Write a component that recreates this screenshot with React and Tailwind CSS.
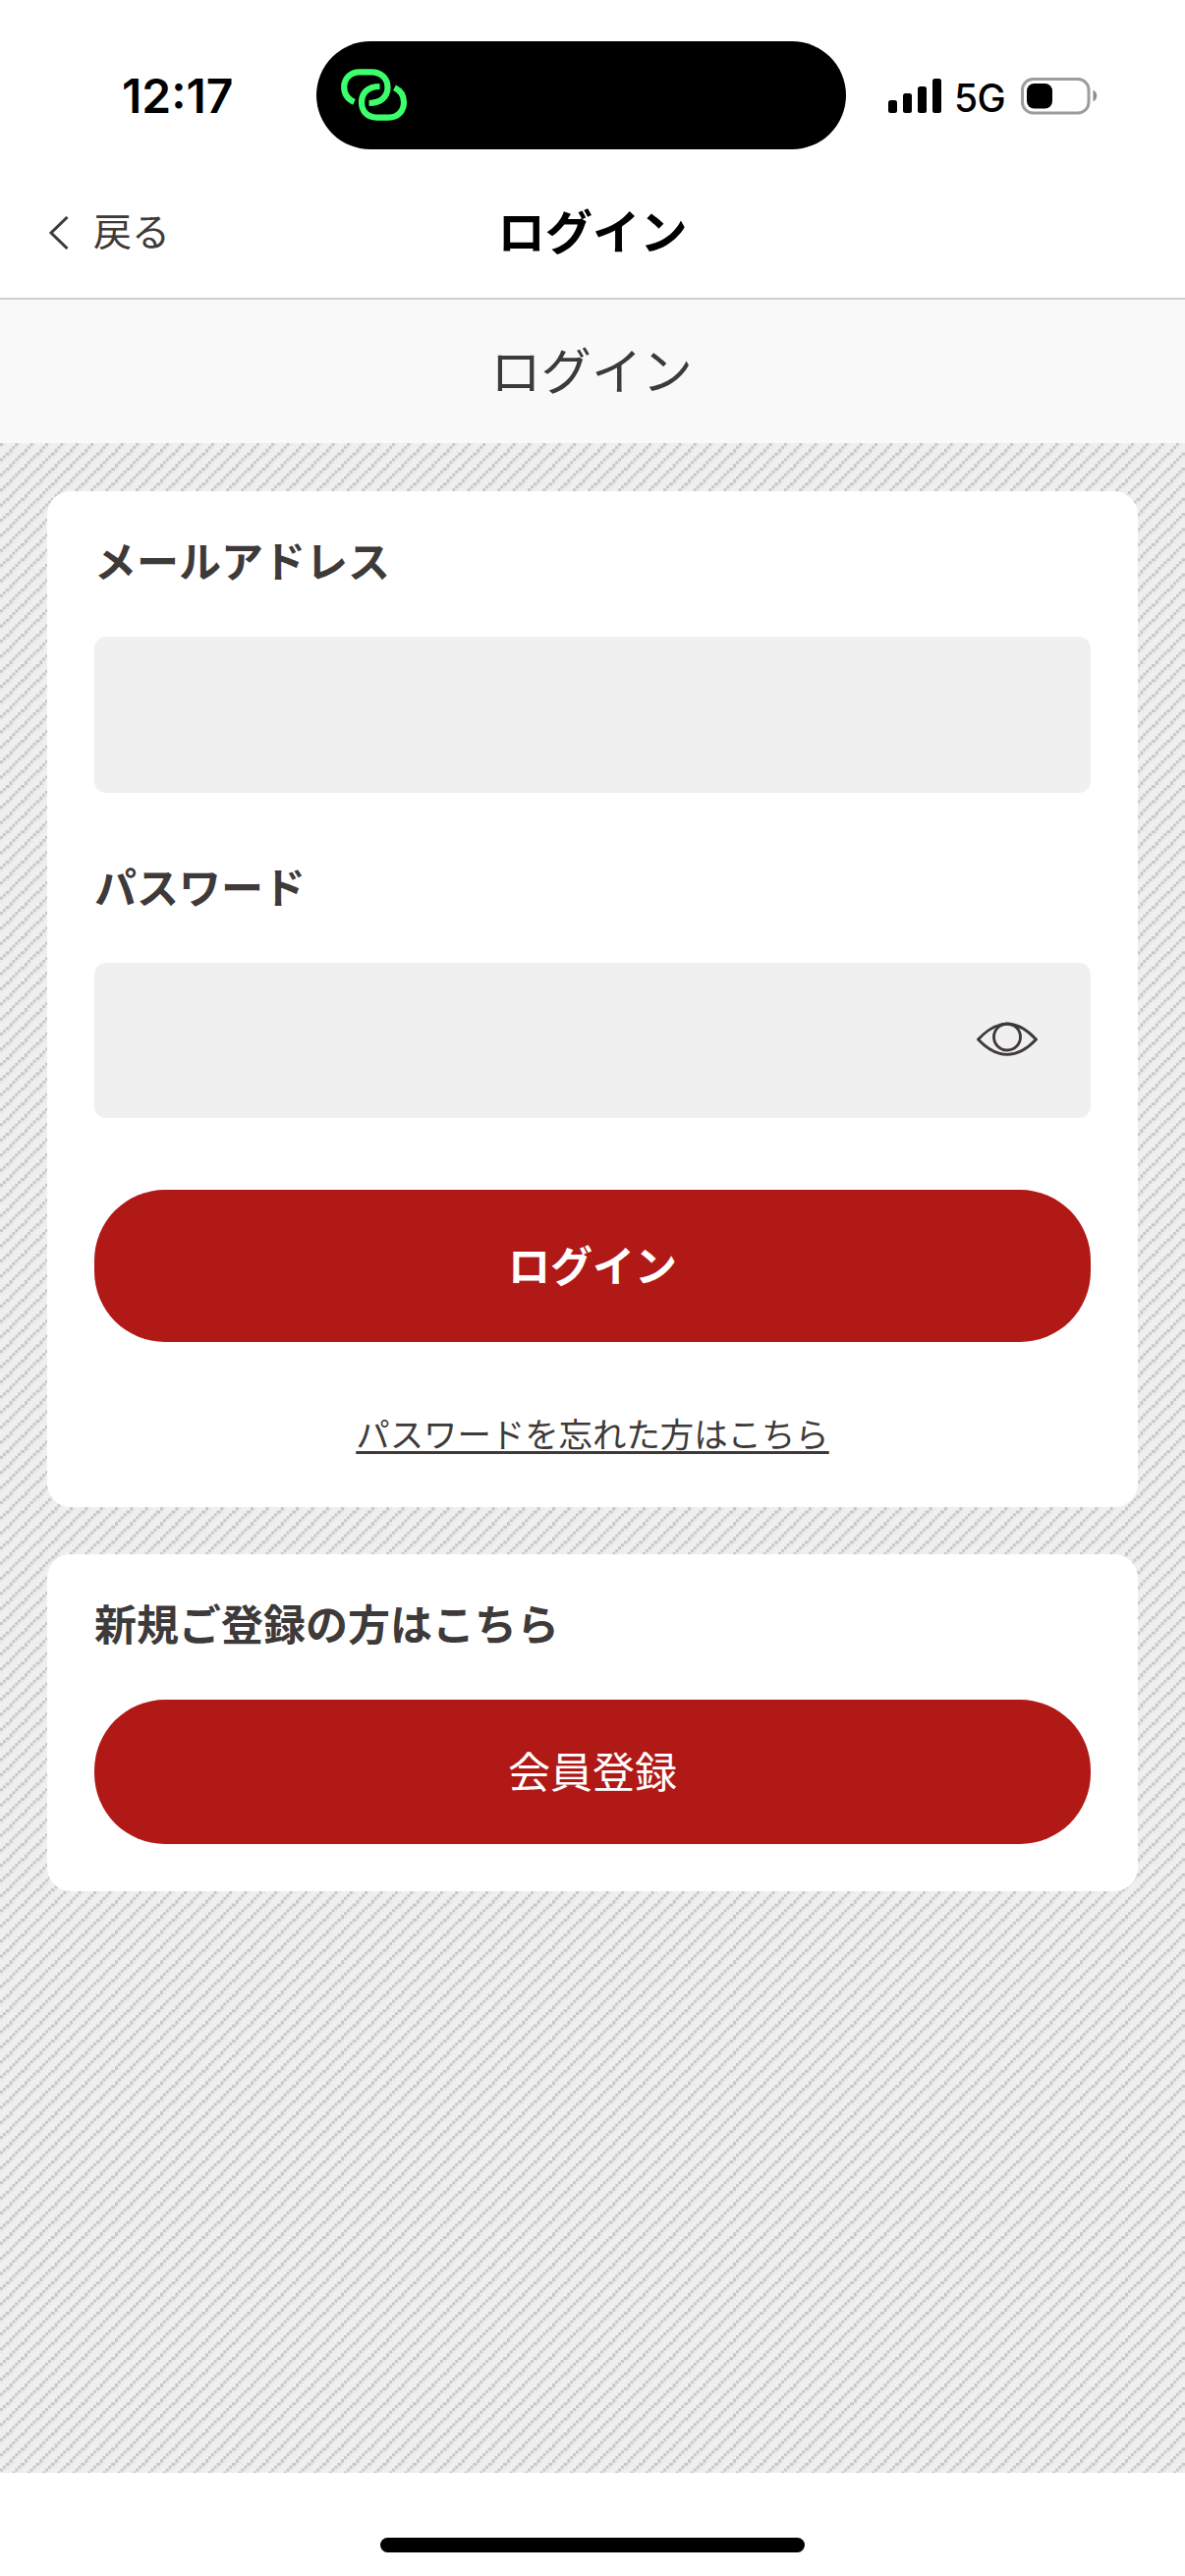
import { useState } from "react";

function StatusBar() {
  return (
    <div className="flex h-[173px] items-start">
      <div className="ml-[124px] mt-[69px] w-[198px] font-[Inter] text-[48px] leading-[58px] font-semibold text-black">12:17</div>
      <div className="mt-[42px] flex h-[110px] w-[539px] items-center rounded-[55px] bg-black pl-[24px]">
        <svg width="70" height="56" viewBox="346 69 70 56" fill="none" stroke="#3bff6b" strokeWidth="6.2">
          <path d="M360.5 103.8C354 101 350.2 95.500 350.2 88.500C350.200 80 356.500 73.300 366 73.300H378C388 73.300 394.500 80 394.500 89C394.500 98 388 105 375.500 105" />
          <path d="M401.500 89.200C407.800 92.200 411 97.500 411 104C411 113 405 119.700 395.500 119.700H383.500C373.500 119.700 368 113 368 104C368 95 374 88 386.500 88" />
        </svg>
      </div>
      <svg className="ml-[43px] mt-[80px]" width="54" height="35">
        <rect x="0" y="22" width="9" height="13" rx="2.5" />
        <rect x="15" y="15" width="9" height="20" rx="2.5" />
        <rect x="30" y="8" width="9" height="27" rx="2.5" />
        <rect x="45" y="0" width="9" height="35" rx="2.5" />
      </svg>
      <div className="ml-[13px] mt-[76px] w-[68px] font-[Inter] text-[39px] leading-[48px] font-medium tracking-[-0.5px] text-black">5G</div>
      <svg className="mt-[79px]" width="80" height="38">
        <rect x="1.5" y="1.5" width="67.5" height="34.5" rx="11" fill="none" stroke="#9c9c9c" strokeWidth="3" />
        <rect x="6" y="6" width="26" height="25.5" rx="7.5" />
        <path d="M73.5 12.5C78.5 15 78.5 22 73.5 24.5Z" fill="#8c8c8c" />
      </svg>
    </div>
  );
}

function NavBar() {
  return (
    <header className="grid h-[132px] grid-cols-3 items-center border-b-2 border-[#d0d0d0] px-[48px] pb-[2px]">
      <button className="flex items-center gap-[25px] text-[39px] text-[#3e3a39]">
        <svg width="22" height="34" fill="none" stroke="currentColor" strokeWidth="3">
          <path d="M20.5 1L4 17L20.5 33" />
        </svg>
        <span className="pb-[8px]">戻る</span>
      </button>
      <h1 className="pb-[8px] text-center text-[48.3px] font-bold text-black">ログイン</h1>
    </header>
  );
}

function Stripes() {
  return (
    <svg className="absolute inset-0 h-full w-full" shapeRendering="crispEdges">
      <defs>
        <pattern id="stripes" width="15.344" height="15.385" patternUnits="userSpaceOnUse">
          <path d="M0 0H3.07V3.08H0ZM12.27 3.08H15.34V6.15H12.27ZM9.2 6.15H12.27V9.23H9.2ZM6.14 9.23H9.2V12.3H6.14ZM3.07 12.3H6.14V15.38H3.07Z" fill="#c8c8c8" />
          <path d="M3.07 0H6.14V3.08H3.07ZM0 3.08H3.07V6.15H0ZM12.27 6.15H15.34V9.23H12.27ZM9.2 9.23H12.27V12.3H9.2ZM6.14 12.3H9.2V15.38H6.14Z" fill="#e9e9e9" />
        </pattern>
      </defs>
      <rect width="100%" height="100%" fill="url(#stripes)" />
    </svg>
  );
}

export default function App() {
  const [email, setEmail] = useState("");
  const [password, setPassword] = useState("");
  const [showPassword, setShowPassword] = useState(false);

  return (
    <div className="flex h-[2622px] w-[1206px] flex-col bg-white font-['Noto_Sans_CJK_JP',sans-serif] text-[#3e3a39]">
      <StatusBar />
      <NavBar />
      <div className="flex h-[146px] items-center justify-center bg-[#f9f9f9] pr-[2px] pb-[6px] text-[51.4px]">ログイン</div>

      <main className="relative flex h-[2066px] flex-col gap-[48px] bg-[#efefef] px-[48px] pt-[49px]">
        <Stripes />
        <form className="relative flex h-[1034px] flex-col rounded-[24px] bg-white px-[48px] pt-[37px]" onSubmit={(e) => e.preventDefault()}>
          <label htmlFor="email" className="h-[64px] text-[43px] leading-[64px] font-bold">メールアドレス</label>
          <input
            id="email"
            type="email"
            value={email}
            onChange={(e) => setEmail(e.target.value)}
            className="mt-[47px] h-[159px] rounded-[12px] bg-[#f0f0f0] px-[36px] text-[43px]"
          />
          <label htmlFor="password" className="mt-[62px] h-[64px] text-[43px] leading-[64px] font-bold">パスワード</label>
          <div className="mt-[47px] flex h-[158px] items-center rounded-[12px] bg-[#f0f0f0] pr-[53px]">
            <input
              id="password"
              type={showPassword ? "text" : "password"}
              value={password}
              onChange={(e) => setPassword(e.target.value)}
              className="h-full flex-1 px-[36px] text-[43px]"
            />
            <button type="button" className="pb-[3px]" onClick={() => setShowPassword(!showPassword)}>
              <svg width="64" height="36" viewBox="0 0 64 36" fill="none" stroke="currentColor" strokeWidth="2.9">
                <path d="M2.5 18C22 -3 42 -3 61.5 18C42 38.5 22 38.5 2.5 18Z" strokeLinejoin="round" />
                <circle cx="32" cy="15.5" r="13.5" />
              </svg>
            </button>
          </div>
          <button type="submit" className="mt-[73px] h-[155px] rounded-[72px] bg-[#b11917] pb-[4px] text-[43px] font-bold text-white">ログイン</button>
          <a href="#" className="mt-[67px] self-center text-[34.4px] leading-[50px] underline decoration-[3px] underline-offset-[4px]">パスワードを忘れた方はこちら</a>
        </form>

        <section className="relative flex h-[343px] flex-col rounded-[24px] bg-white px-[48px] pt-[37px]">
          <h2 className="h-[64px] text-[43px] leading-[64px] font-bold">新規ご登録の方はこちら</h2>
          <button className="mt-[47px] h-[147px] rounded-[72px] bg-[#b11917] pb-[4px] text-[43px] text-white">会員登録</button>
        </section>
      </main>

      <div className="flex h-[105px] items-end justify-center pb-[24px]">
        <div className="h-[15px] w-[432px] rounded-full bg-black" />
      </div>
    </div>
  );
}
